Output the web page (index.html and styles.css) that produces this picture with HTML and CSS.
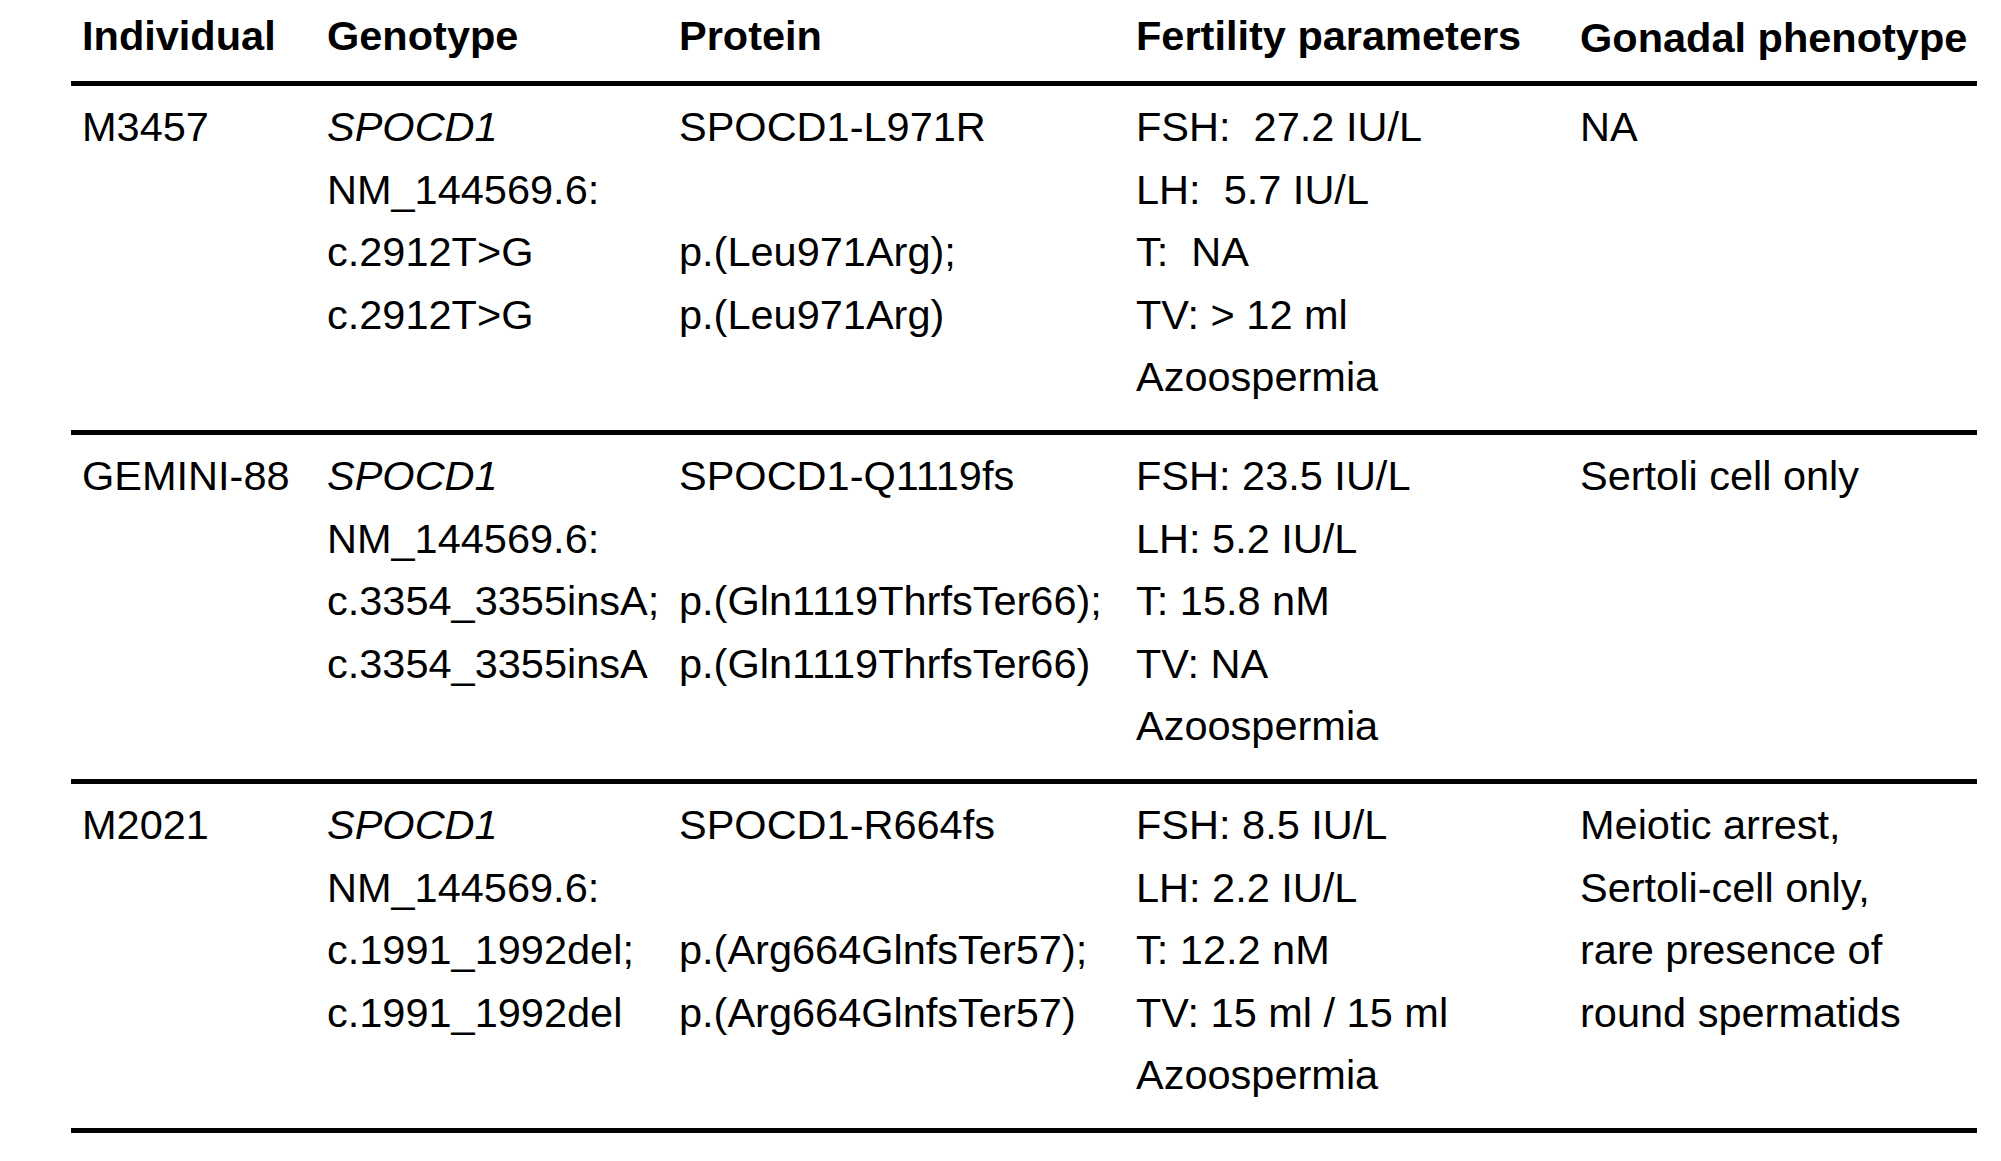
FILE: index.html
```html
<!DOCTYPE html>
<html lang="en">
<head>
<meta charset="utf-8">
<title>SPOCD1 variants</title>
<link rel="stylesheet" href="styles.css">
</head>
<body>
<div class="table">
  <div class="row head">
    <div class="cell">Individual</div>
    <div class="cell">Genotype</div>
    <div class="cell">Protein</div>
    <div class="cell">Fertility parameters</div>
    <div class="cell gonadal">Gonadal phenotype</div>
  </div>
  <div class="row body">
    <div class="cell"><div class="ln">M3457</div></div>
    <div class="cell">
      <div class="ln"><i>SPOCD1</i></div>
      <div class="ln">NM_144569.6:</div>
      <div class="ln">c.2912T&gt;G</div>
      <div class="ln">c.2912T&gt;G</div>
    </div>
    <div class="cell">
      <div class="ln">SPOCD1-L971R</div>
      <div class="ln blank"></div>
      <div class="ln">p.(Leu971Arg);</div>
      <div class="ln">p.(Leu971Arg)</div>
    </div>
    <div class="cell">
      <div class="ln">FSH:  27.2 IU/L</div>
      <div class="ln">LH:  5.7 IU/L</div>
      <div class="ln">T:  NA</div>
      <div class="ln">TV: &gt; 12 ml</div>
      <div class="ln">Azoospermia</div>
    </div>
    <div class="cell"><div class="ln">NA</div></div>
  </div>
  <div class="row body">
    <div class="cell"><div class="ln">GEMINI-88</div></div>
    <div class="cell">
      <div class="ln"><i>SPOCD1</i></div>
      <div class="ln">NM_144569.6:</div>
      <div class="ln">c.3354_3355insA;</div>
      <div class="ln">c.3354_3355insA</div>
    </div>
    <div class="cell">
      <div class="ln">SPOCD1-Q1119fs</div>
      <div class="ln blank"></div>
      <div class="ln">p.(Gln1119ThrfsTer66);</div>
      <div class="ln">p.(Gln1119ThrfsTer66)</div>
    </div>
    <div class="cell">
      <div class="ln">FSH: 23.5 IU/L</div>
      <div class="ln">LH: 5.2 IU/L</div>
      <div class="ln">T: 15.8 nM</div>
      <div class="ln">TV: NA</div>
      <div class="ln">Azoospermia</div>
    </div>
    <div class="cell"><div class="ln">Sertoli cell only</div></div>
  </div>
  <div class="row body last">
    <div class="cell"><div class="ln">M2021</div></div>
    <div class="cell">
      <div class="ln"><i>SPOCD1</i></div>
      <div class="ln">NM_144569.6:</div>
      <div class="ln">c.1991_1992del;</div>
      <div class="ln">c.1991_1992del</div>
    </div>
    <div class="cell">
      <div class="ln">SPOCD1-R664fs</div>
      <div class="ln blank"></div>
      <div class="ln">p.(Arg664GlnfsTer57);</div>
      <div class="ln">p.(Arg664GlnfsTer57)</div>
    </div>
    <div class="cell">
      <div class="ln">FSH: 8.5 IU/L</div>
      <div class="ln">LH: 2.2 IU/L</div>
      <div class="ln">T: 12.2 nM</div>
      <div class="ln">TV: 15 ml / 15 ml</div>
      <div class="ln">Azoospermia</div>
    </div>
    <div class="cell">
      <div class="ln">Meiotic arrest,</div>
      <div class="ln">Sertoli-cell only,</div>
      <div class="ln">rare presence of</div>
      <div class="ln">round spermatids</div>
    </div>
  </div>
</div>
</body>
</html>
```

FILE: styles.css
```css
html, body {
  margin: 0;
  padding: 0;
  background: #ffffff;
}

body {
  font-family: "Liberation Sans", Arial, Helvetica, sans-serif;
  font-size: 41.5px;
  line-height: 62.5px;
  color: #000000;
}

.table {
  margin-left: 71px;
  width: 1906px;
}

.row {
  display: grid;
  grid-template-columns: 245px 352px 457px 444px 408px;
}

.cell {
  padding-left: 11px;
  white-space: nowrap;
}

.head {
  font-weight: bold;
  padding-top: 5px;
  padding-bottom: 11.5px;
  border-bottom: 5px solid #000000;
}

.head .gonadal {
  padding-top: 2px;
}

.body {
  padding-top: 10px;
  padding-bottom: 21px;
  border-bottom: 5px solid #000000;
}

.body + .body {
  padding-top: 10.5px;
}

.ln {
  height: 62.5px;
  white-space: pre;
}

.ln i {
  font-style: italic;
}
```
